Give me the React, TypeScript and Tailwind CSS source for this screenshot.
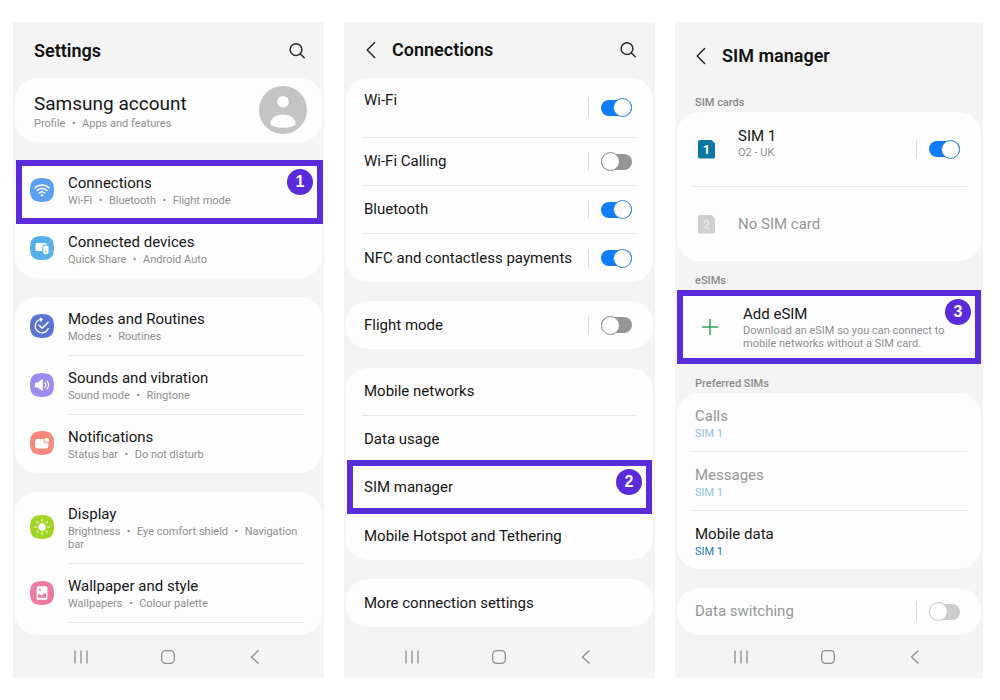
import type { ReactNode } from "react";

const bullets = (items: string[]) => items.join("\u2004 • \u2004");

const SearchIcon = () => (
  <svg viewBox="0 0 18 18" className="size-[18px]" fill="none" stroke="#2b2b2b" strokeWidth="1.5" strokeLinecap="round">
    <circle cx="8" cy="7.6" r="5.9" />
    <path d="M12.3 12 16.2 15.8" />
  </svg>
);

const BackIcon = () => (
  <svg viewBox="0 0 10 18" className="h-[18px] w-[10px]" fill="none" stroke="#1f1f1f" strokeWidth="1.4" strokeLinecap="round" strokeLinejoin="round">
    <path d="M8.6 1.5 1.2 9 8.6 16.5" />
  </svg>
);

const Tile = ({ color, children }: { color: string; children: ReactNode }) => (
  <svg viewBox="0 0 24 24" className="mb-0.5 size-6 shrink-0" fill="none" stroke="#fff" strokeLinecap="round" strokeLinejoin="round">
    <path d="M12 0C20.5 0 24 3.5 24 12S20.5 24 12 24 0 20.5 0 12 3.5 0 12 0Z" fill={color} stroke="none" />
    {children}
  </svg>
);

const WifiTile = () => (
  <Tile color="#5b9ff0">
    <path d="M4.8 9.9a10.3 10.3 0 0 1 14.4 0M7 12.5a7.1 7.1 0 0 1 10 0M9.3 15a3.9 3.9 0 0 1 5.4 0" strokeWidth="1.4" />
    <circle cx="12" cy="17.2" r="1.2" fill="#fff" stroke="none" />
  </Tile>
);

const DevicesTile = () => (
  <Tile color="#58b0ea">
    <rect x="5.6" y="7" width="11" height="8" rx="1" fill="#fff" stroke="none" />
    <rect x="12.8" y="9.2" width="6.2" height="9.2" rx="1.6" fill="#fff" stroke="#58b0ea" strokeWidth="1" />
    <path d="M15.4 15.8h1" stroke="#58b0ea" strokeWidth="1" />
  </Tile>
);

const RoutinesTile = () => (
  <Tile color="#5b74d2">
    <path d="M11.6 5.4a6.7 6.7 0 1 0 6.6 9.2M10.4 4.2l1.6 1.2-1.2 1.7" strokeWidth="1.4" />
    <path d="m9.2 11.2 3 3 5.9-5.9" strokeWidth="1.5" />
  </Tile>
);

const SoundTile = () => (
  <Tile color="#9c8cf0">
    <path d="M5 10.2c0-.5.3-.8.8-.8h2.1l3.9-3c.5-.4 1-.2 1 .5v10.2c0 .7-.5.9-1 .5l-3.9-3H5.8c-.5 0-.8-.3-.8-.8Z" fill="#fff" stroke="none" />
    <path d="M14.8 9.7a3.7 3.7 0 0 1 0 4.6M17 8a6.3 6.3 0 0 1 0 8" strokeWidth="1.2" />
  </Tile>
);

const NotificationsTile = () => (
  <Tile color="#f6887c">
    <rect x="5" y="8" width="13.4" height="9.6" rx="3" fill="#fff" stroke="none" />
    <circle cx="17" cy="9.2" r="2.9" fill="#fff" stroke="#f6887c" strokeWidth="1" />
  </Tile>
);

const DisplayTile = () => (
  <Tile color="#a2d424">
    <circle cx="12" cy="12" r="3.8" fill="#fff" stroke="none" />
    <path d="M12 4.6v1.6M12 17.8v1.6M4.6 12h1.6M17.8 12h1.6M6.8 6.8l1 1M16.2 16.2l1 1M6.8 17.2l1-1M16.2 7.8l1-1" strokeWidth="1.2" />
  </Tile>
);

const WallpaperTile = () => (
  <Tile color="#ee7aa4">
    <rect x="6.6" y="5.2" width="10.8" height="13.6" rx="1.6" fill="#fff" stroke="none" />
    <circle cx="10" cy="8.8" r="1" fill="#ee7aa4" stroke="none" />
    <path d="M8 16.8v-2.8c1-1 1.9-1 2.9 0 .7.6 1 .5 1.6-.1l1.3-1.4c.8-.8 1.4-.7 2.2.2v4.1Z" fill="#ee7aa4" stroke="none" />
  </Tile>
);

const Avatar = () => (
  <svg viewBox="0 0 48 48" className="size-12">
    <circle cx="24" cy="24" r="24" fill="#c4c4c4" />
    <circle cx="24" cy="15.7" r="5.8" fill="#fdfdfd" />
    <path d="M11.4 36.5c1.1-5 6.1-8 12.6-8s11.5 3 12.6 8c.3 1.4-.3 2.2-1.5 2.9C32 41 28.3 41.700 24 41.700s-8-.7-11.1-2.3c-1.200-.7-1.800-1.500-1.500-2.900Z" fill="#fdfdfd" />
  </svg>
);

const SimIcon = ({ slot, active }: { slot: number; active?: boolean }) => (
  <span
    className={`flex h-[19px] w-[17px] shrink-0 items-center justify-center rounded-xs text-[13px] leading-none font-bold [clip-path:polygon(0_0,75%_0,100%_20%,100%_100%,0_100%)] ${
      active ? "bg-[#0e76a3] text-white" : "bg-[#cfcfcf] text-[#e6e6e6]"
    }`}
  >
    {slot}
  </span>
);

const NavBar = () => (
  <nav className="mt-auto flex h-[42px] items-center justify-center gap-[73px] pr-0.5">
    <button type="button" aria-label="Recent apps">
      <svg viewBox="0 0 14 14" className="size-3.5" stroke="#8f8f8f" strokeWidth="1.3">
        <path d="M1 .5v13M7 .5v13M13 .5v13" />
      </svg>
    </button>
    <button type="button" aria-label="Home">
      <svg viewBox="0 0 14 14" className="size-3.5" fill="none" stroke="#8f8f8f" strokeWidth="1.3">
        <rect x=".7" y=".7" width="12.6" height="12.6" rx="3.8" />
      </svg>
    </button>
    <button type="button" aria-label="Back">
      <svg viewBox="0 0 14 14" className="size-3.5" fill="none" stroke="#8f8f8f" strokeWidth="1.3">
        <path d="M10.5.5 3.5 7l7 6.5" />
      </svg>
    </button>
  </nav>
);

const Highlight = ({ step, className }: { step: number; className: string }) => (
  <div className={`pointer-events-none absolute z-10 border-[6px] border-[#5a2bd8] ${className}`}>
    <span className="absolute top-[3px] right-1 flex size-[26px] items-center justify-center rounded-full bg-[#5a2bd8] font-['Liberation_Sans',sans-serif] text-base font-bold text-white">
      {step}
    </span>
  </div>
);

const Switch = ({ id, on, disabled }: { id: string; on?: boolean; disabled?: boolean }) => (
  <div className="flex shrink-0 items-center gap-3">
    <span className="h-[19px] w-px bg-[#dcdcdc]" />
    <input
      id={id}
      type="checkbox"
      role="switch"
      defaultChecked={on}
      disabled={disabled}
      className="flex h-4 w-[31px] appearance-none items-center rounded-full bg-[#959595] before:size-[19px] before:shrink-0 before:rounded-full before:border before:border-[#8c8c8c] before:bg-[#fdfdfd] checked:justify-end checked:bg-[#0f7dfa] checked:before:border-[#2f86dc] disabled:bg-[#cdcdcd] disabled:before:border-[#c8c8c8]"
    />
  </div>
);

const Card = ({ children, className = "" }: { children: ReactNode; className?: string }) => (
  <section className={`rounded-[22px] bg-[#fdfdfd] ${className}`}>{children}</section>
);

const Phone = ({ children }: { children: ReactNode }) => (
  <main className="flex flex-col bg-[#f4f4f4] px-0.5">{children}</main>
);

interface SettingProps {
  icon: ReactNode;
  title: string;
  items: string[];
  divider?: boolean;
  children?: ReactNode;
}

const Setting = ({ icon, title, items, divider, children }: SettingProps) => (
  <div className="relative">
    <a href="#" className="flex items-center gap-3.5 pr-[18px] pl-[15px]">
      {icon}
      <div className={`flex-1 pt-3 pb-3 ${divider ? "border-b border-[#e8e8e8]" : ""}`}>
        <div className="mb-px text-[15px] leading-5 text-[#161616]">{title}</div>
        <div className="text-[11px] leading-[13px] text-[#8e8e8e]">{bullets(items)}</div>
      </div>
    </a>
    {children}
  </div>
);

interface ConnectionProps {
  id: string;
  title: string;
  on?: boolean;
  divider?: boolean;
}

const rowBox = "mx-4 flex h-12 items-center pr-[5px] pl-0.5";
const rowLine = "border-b border-[#e8e8e8]";

const Toggle = ({ id, title, on, divider }: ConnectionProps) => (
  <div className={`${rowBox} justify-between ${divider ? rowLine : ""}`}>
    <label htmlFor={id}>{title}</label>
    <Switch id={id} on={on} />
  </div>
);

const LinkRow = ({ title, divider }: { title: string; divider?: boolean }) => (
  <a href="#" className={`${rowBox} ${divider ? rowLine : ""}`}>{title}</a>
);

const SectionLabel = ({ children }: { children: ReactNode }) => (
  <h2 className="px-[18px] pt-[13px] pb-0.5 text-[11px] leading-[14px] font-medium text-[#8a8a8a]">{children}</h2>
);

interface PreferredProps {
  title: string;
  muted?: boolean;
  divider?: boolean;
}

const Preferred = ({ title, muted, divider }: PreferredProps) => (
  <a href="#" className={`mx-3.5 block px-1 pt-[13px] pb-[11px] ${divider ? rowLine : ""}`}>
    <div className={`mb-px leading-5 ${muted ? "text-[#969696]" : "text-[#161616]"}`}>{title}</div>
    <div className={`text-[11px] leading-[13px] ${muted ? "text-[#94c3dd]" : "text-[#1878ac]"}`}>SIM 1</div>
  </a>
);

const SettingsScreen = () => (
  <Phone>
    <header className="flex h-14 items-center justify-between pt-0.5 pr-4 pl-[19px]">
      <h1 className="text-lg font-semibold text-[#111]">Settings</h1>
      <button type="button" aria-label="Search"><SearchIcon /></button>
    </header>
    <div className="flex flex-col gap-[19px]">
      <Card>
        <a href="#" className="flex h-16 items-center justify-between pr-[15px] pl-[19px]">
          <div className="pt-0.5">
            <div className="text-[19px] leading-6 text-[#161616]">Samsung account</div>
            <div className="text-[11px] leading-[15px] text-[#8e8e8e]">{bullets(["Profile", "Apps and features"])}</div>
          </div>
          <Avatar />
        </a>
      </Card>
      <Card>
        <Setting icon={<WifiTile />} title="Connections" items={["Wi-Fi", "Bluetooth", "Flight mode"]} divider>
          <Highlight step={1} className="-top-px -right-px -bottom-1 left-px" />
        </Setting>
        <Setting icon={<DevicesTile />} title="Connected devices" items={["Quick Share", "Android Auto"]} />
      </Card>
      <Card>
        <Setting icon={<RoutinesTile />} title="Modes and Routines" items={["Modes", "Routines"]} divider />
        <Setting icon={<SoundTile />} title="Sounds and vibration" items={["Sound mode", "Ringtone"]} divider />
        <Setting icon={<NotificationsTile />} title="Notifications" items={["Status bar", "Do not disturb"]} />
      </Card>
      <Card className="pb-3">
        <Setting icon={<DisplayTile />} title="Display" items={["Brightness", "Eye comfort shield", "Navigation bar"]} divider />
        <Setting icon={<WallpaperTile />} title="Wallpaper and style" items={["Wallpapers", "Colour palette"]} divider />
      </Card>
    </div>
    <NavBar />
  </Phone>
);

const ConnectionsScreen = () => (
  <Phone>
    <header className="flex h-14 items-center gap-4 pr-4 pl-5">
      <button type="button" aria-label="Navigate up"><BackIcon /></button>
      <h1 className="flex-1 text-lg font-semibold text-[#111]">Connections</h1>
      <button type="button" aria-label="Search"><SearchIcon /></button>
    </header>
    <div className="flex flex-col gap-[19px]">
      <Card>
        <div className={`mx-4 flex h-[60px] justify-between pr-[5px] pl-0.5 ${rowLine}`}>
          <label htmlFor="wifi" className="pt-3 leading-5">Wi-Fi</label>
          <Switch id="wifi" on />
        </div>
        <Toggle id="wifi-calling" title="Wi-Fi Calling" divider />
        <Toggle id="bluetooth" title="Bluetooth" on divider />
        <Toggle id="nfc" title="NFC and contactless payments" on />
      </Card>
      <Card>
        <Toggle id="flight-mode" title="Flight mode" />
      </Card>
      <Card>
        <LinkRow title="Mobile networks" divider />
        <LinkRow title="Data usage" divider />
        <div className="relative">
          <LinkRow title="SIM manager" divider />
          <Highlight step={2} className="inset-x-px -top-1 -bottom-0.5" />
        </div>
        <LinkRow title="Mobile Hotspot and Tethering" />
      </Card>
      <Card>
        <LinkRow title="More connection settings" />
      </Card>
    </div>
    <NavBar />
  </Phone>
);

const SimManagerScreen = () => (
  <Phone>
    <header className="flex h-[61px] items-center gap-4 pt-1.5 pl-[19px]">
      <button type="button" aria-label="Navigate up"><BackIcon /></button>
      <h1 className="text-lg font-semibold text-[#111]">SIM manager</h1>
    </header>
    <SectionLabel>SIM cards</SectionLabel>
    <Card>
      <div className={`mx-3.5 flex h-[75px] items-center px-[7px] ${rowLine}`}>
        <SimIcon slot={1} active />
        <label htmlFor="sim-1" className="ml-[23px] flex-1 pb-3.5">
          <span className="block leading-5 text-[#161616]">SIM 1</span>
          <span className="block text-[11px] leading-[13px] text-[#8e8e8e]">O2 - UK</span>
        </label>
        <Switch id="sim-1" on />
      </div>
      <div className="mx-3.5 flex h-[74px] items-center gap-[23px] px-[7px] text-[#969696]">
        <SimIcon slot={2} />
        No SIM card
      </div>
    </Card>
    <SectionLabel>eSIMs</SectionLabel>
    <Card className="relative">
      <a href="#" className="flex h-[74px] items-center gap-[25px] pr-6 pl-[25px]">
        <svg viewBox="0 0 16 16" className="size-4 shrink-0" stroke="#2ba55a" strokeWidth="1.5">
          <path d="M8 0v16M0 8h16" />
        </svg>
        <div>
          <div className="leading-5 text-[#161616]">Add eSIM</div>
          <div className="text-[11px] leading-[13px] text-[#8e8e8e]">
            Download an eSIM so you can connect to mobile networks without a SIM card.
          </div>
        </div>
      </a>
      <Highlight step={3} className="inset-0" />
    </Card>
    <SectionLabel>Preferred SIMs</SectionLabel>
    <Card>
      <Preferred title="Calls" muted divider />
      <Preferred title="Messages" muted divider />
      <Preferred title="Mobile data" />
    </Card>
    <Card className="mt-[19px]">
      <div className="flex h-[47px] items-center justify-between pr-[21px] pl-[18px] text-[#969696]">
        <label htmlFor="data-switching">Data switching</label>
        <Switch id="data-switching" disabled />
      </div>
    </Card>
    <NavBar />
  </Phone>
);

const App = () => (
  <div className="grid min-h-screen grid-cols-[311fr_311fr_308fr] gap-5 bg-white pt-[22px] pr-[17px] pb-[22px] pl-[13px] font-[Roboto,sans-serif] text-[15px] text-[#161616]">
    <SettingsScreen />
    <ConnectionsScreen />
    <SimManagerScreen />
  </div>
);

export default App;
